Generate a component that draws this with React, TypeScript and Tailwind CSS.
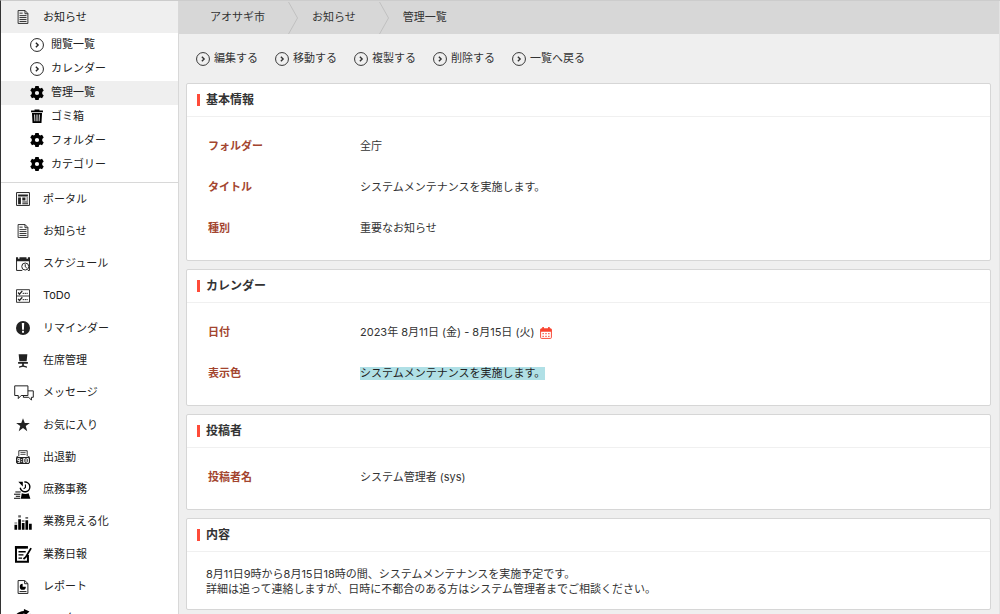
import React from 'react';

type IconProps = { className?: string };

const svgProps = { viewBox: '0 0 20 20', 'aria-hidden': true } as const;

function CircleArrow({ className = 'size-3.5' }: IconProps) {
  return (
    <svg {...svgProps} className={className} fill="none" stroke="currentColor">
      <circle cx="10" cy="10" r="9.2" strokeWidth="1.4" />
      <path d="M8.4 6.8 11.6 10l-3.2 3.2" strokeWidth="2" />
    </svg>
  );
}

function Gear() {
  return (
    <svg {...svgProps} className="size-3.5" fill="black" fillRule="evenodd">
      <path d="M7.6 0h4.8l.5 2.6 1.6.9 2.7-.9 2.4 4-2.1 1.8v3.2l2.1 1.8-2.4 4-2.7-.9-1.6.9-.5 2.6H7.600l-.5-2.6-1.6-.9-2.700.9-2.400-4 2.100-1.800V8.400L.4 6.600l2.400-4 2.700.9 1.600-.9zM10 7a3 3 0 1 0 0 6 3 3 0 0 0 0-6z" />
    </svg>
  );
}

function Trash() {
  return (
    <svg {...svgProps} className="size-3.5" fill="black" fillRule="evenodd">
      <path d="M1.500 2.200h5V.6h7v1.600h5v2.600h-17zM2.800 5.800h14.400L16.400 20H3.600zM6 8l.4 9.600h1.200L7.300 8zm3.300 0v9.600h1.400V8zm3.400 0-.3 9.600h1.200L14 8z" />
    </svg>
  );
}

function DocIcon() {
  return (
    <svg {...svgProps} className="size-3.5" fill="none" stroke="currentColor" strokeWidth="1.3">
      <path d="M3 .8h10L17 5v14.2H3zM12.8 1v4.300H17" />
      <path d="M5 4.500h4.500M5 8h10M5 10.800h10M5 13.600h10M5 16.400h10" />
    </svg>
  );
}

function PortalIcon() {
  return (
    <svg {...svgProps} className="size-3.5" fill="currentColor">
      <path d="M.8.8h18.400v18.400H.8z" fill="none" stroke="currentColor" strokeWidth="1.4" />
      <path d="M3 3.500h14v3H3zM3 8h4v9.500H3zM9 8h4.500v4H9zM15 8h2.200v1.400H15zM15 10.600h2.200V12H15zM9 13.500h8.200V15H9zM9 16.200h8.200v1.400H9z" />
    </svg>
  );
}

function ScheduleIcon() {
  return (
    <svg {...svgProps} className="size-3.5" fill="none" stroke="currentColor" strokeWidth="1.4">
      <path d="M.8 5v14.200H9M19.200 5v14.200H17" />
      <path d="M0 .5h3v2h2v-2h10v2h2v-2h3V6H0z" fill="currentColor" stroke="none" />
      <circle cx="13.2" cy="13.6" r="5" />
      <path d="M13.200 10.300v3.600l2.300 2" />
    </svg>
  );
}

function TodoIcon() {
  return (
    <svg {...svgProps} className="size-3.5" fill="none" stroke="currentColor">
      <path d="M.7 1h18.600v18H.7zM.7 10h18.600" strokeWidth="1.3" />
      <path d="m3 5 2 2.400L9 2.800M3 14l2 2.400 4-4.600" strokeWidth="1.8" />
      <path d="M9.500 6.200h7.500M9.500 15.200h7.500" strokeWidth="1.4" strokeDasharray="2.4 .8" />
    </svg>
  );
}

function AlertIcon() {
  return (
    <svg {...svgProps} className="size-3.5">
      <circle cx="10" cy="10" r="10" fill="currentColor" />
      <path d="M8.300 3h3.400l-.4 9.400H8.700zM8.600 14h2.800v2.800H8.600z" fill="white" />
    </svg>
  );
}

function ChairIcon() {
  return (
    <svg {...svgProps} className="size-3.5" fill="currentColor">
      <path d="M3.800.5h12.400l-1 10H4.800zM3 11.500h14V14h-5.800v2.600l4.500 1.400v1.500L10 18.200l-5.700 1.300V18l4.500-1.400V14H3z" />
    </svg>
  );
}

function ChatIcon() {
  return (
    <svg viewBox="0 0 28 22" aria-hidden="true" className="ml-0.5 h-4 w-5 shrink-0" fill="white" stroke="currentColor" strokeWidth="1.4">
      <path d="M15 8h12v9h-2.600v4l-3.800-4H13z" />
      <path d="M1 1h18.500v13.500H10L6 18.800v-4.300H1z" />
    </svg>
  );
}

function StarIcon() {
  return (
    <svg {...svgProps} className="size-3.5" fill="currentColor">
      <path d="m10 .2 2.500 7h7.300l-5.900 4.300 2.200 7.300L10 14.400l-6.100 4.400 2.200-7.300L.2 7.200h7.300z" />
    </svg>
  );
}

function TimeCardIcon() {
  return (
    <svg {...svgProps} className="size-3.5" fill="none" stroke="currentColor">
      <path d="M4 9V1h12v8" strokeWidth="1.3" />
      <path d="M6.300 3.700h7.400M6.300 6.300h7.400" strokeWidth="1.1" />
      <path d="M1 8.800h2v1.200h14V8.800h2l1 2.700V18l-1.800 2H1.800L0 18v-6.500z" fill="currentColor" stroke="none" />
      <path d="M5.300 15H2.500v-2.800h2.800v5.500H2.500M8 13v1.400M8 16v1.400M10.600 12.200h2.400v5.500h-2.400zM15.400 12.200h2.400v5.500h-2.400z" stroke="white" strokeWidth="1.3" />
    </svg>
  );
}

function DutyIcon() {
  return (
    <svg {...svgProps} className="size-4.5" fill="none" stroke="black">
      <path d="M11.500 1.200a5.400 5.400 0 1 1-4.600 6.300" strokeWidth="1.6" />
      <path d="M4.800.8h5v5.200z" fill="black" stroke="none" />
      <path d="M12.700 4v3.200l-2 1.600" strokeWidth="1.2" />
      <path d="M8.600 13.500c2.500 1.200 5.600 1.200 7.600 0l2 6.300H7.600z" fill="black" stroke="none" />
      <path d="M1.500 12.200h6M0 14.700h7M2 17h4.800M0 19.200h7" strokeWidth="1.1" />
    </svg>
  );
}

function ChartIcon() {
  return (
    <svg {...svgProps} className="size-4.5" fill="black">
      <path d="M.5 13h3v5.500h-3zM4.700 7h3v11.500h-3zM8.700 11h3v7.500h-3zM12.700 8h3v10.500h-3zM16.700 12h3v6.500h-3z" />
      <path d="M4.700 2.500h3V5h-3zM8.700 8h3v1.600h-3zM12.700 4.500h3v2h-3zM.5 10.500h3v1.300h-3z" opacity=".6" />
    </svg>
  );
}

function DiaryIcon() {
  return (
    <svg {...svgProps} className="size-4.5" fill="none" stroke="black">
      <path d="M15.500 11v7.500H2.200V2.500h11" strokeWidth="2.2" />
      <path d="M1 1.200h14.500V4H1z" fill="black" stroke="none" />
      <path d="M19 3.500 13 13.500l-2.500 2" strokeWidth="2" />
      <path d="M5 7.500h8M5 11h5.500M5 14.500h4" strokeWidth="1.4" />
    </svg>
  );
}

function ReportIcon() {
  return (
    <svg {...svgProps} className="size-3.5" fill="none" stroke="currentColor" strokeWidth="1.4">
      <path d="M3 .8h9.500L17 5v14.200H3zM12.300 1v4.300H17" />
      <path d="M9.500 5.500v4H14a4.300 4.300 0 1 1-4.500-4z" fill="black" stroke="none" />
      <path d="M5 16.500h10" />
    </svg>
  );
}

function FlowIcon() {
  return (
    <svg {...svgProps} className="size-5" fill="black">
      <path d="M11 0l5.500 2.500L12 6.500 11.300 4.500C8 5 6.500 7 6 9.500L1.500 8C3 4.500 6.500 2.200 10.800 2zM17 4.500l2 4-3-1zM3 12h5v6H3zM12 12h5v6h-5z" />
    </svg>
  );
}

function CalendarIcon() {
  return (
    <svg {...svgProps} className="size-3 text-[#f9432f]" fill="none" stroke="currentColor">
      <rect x="1" y="3" width="18" height="16" rx="1.5" strokeWidth="1.6" />
      <path d="M1 3h18v5H1zM3.800 0h2.700v4H3.800zM13.500 0h2.700v4h-2.700z" fill="currentColor" stroke="none" />
      <path d="M4 11h12M4 15.500h12" strokeWidth="2" strokeDasharray="2.6 2.1" opacity=".8" />
    </svg>
  );
}

const subItems = [
  { label: '閲覧一覧', icon: <CircleArrow /> },
  { label: 'カレンダー', icon: <CircleArrow /> },
  { label: '管理一覧', icon: <Gear />, active: true },
  { label: 'ゴミ箱', icon: <Trash /> },
  { label: 'フォルダー', icon: <Gear /> },
  { label: 'カテゴリー', icon: <Gear /> },
];

const mainItems = [
  { label: 'ポータル', icon: <PortalIcon /> },
  { label: 'お知らせ', icon: <DocIcon /> },
  { label: 'スケジュール', icon: <ScheduleIcon /> },
  { label: 'ToDo', icon: <TodoIcon /> },
  { label: 'リマインダー', icon: <AlertIcon /> },
  { label: '在席管理', icon: <ChairIcon /> },
  { label: 'メッセージ', icon: <ChatIcon /> },
  { label: 'お気に入り', icon: <StarIcon /> },
  { label: '出退勤', icon: <TimeCardIcon /> },
  { label: '庶務事務', icon: <DutyIcon /> },
  { label: '業務見える化', icon: <ChartIcon /> },
  { label: '業務日報', icon: <DiaryIcon /> },
  { label: 'レポート', icon: <ReportIcon /> },
  { label: 'ワークフロー', icon: <FlowIcon /> },
];

const crumbs = ['アオサギ市', 'お知らせ', '管理一覧'];
const actions = ['編集する', '移動する', '複製する', '削除する', '一覧へ戻る'];

function MenuLink({ label, icon }: { label: string; icon: React.ReactNode }) {
  return (
    <a href="#" className="flex h-full items-center gap-2.5 pl-3">
      <span className="flex w-5 shrink-0 justify-center">{icon}</span>
      {label}
    </a>
  );
}

function Card({ title, children }: { title: string; children: React.ReactNode }) {
  return (
    <section className="rounded-xs border border-[#d6d6d6] bg-white">
      <h2 className="flex h-[33px] items-center gap-1.5 border-b border-[#f0f0f0] pl-2.5 text-xs font-bold text-[#333]">
        <span className="h-3 w-[3px] bg-[#ff4b39]" />
        {title}
      </h2>
      {children}
    </section>
  );
}

function Fields({ rows }: { rows: [string, React.ReactNode][] }) {
  return (
    <dl className="px-[21px] pt-[9px] pb-[11px]">
      {rows.map(([name, value]) => (
        <div key={name} className="flex h-[41px] items-center">
          <dt className="w-[152px] shrink-0 font-bold text-[#a3452f]">{name}</dt>
          <dd className="flex items-center gap-1.5">{value}</dd>
        </div>
      ))}
    </dl>
  );
}

export default function App() {
  return (
    <div className="flex h-screen overflow-hidden border-t border-l border-t-[#cccccc] border-l-[#333] bg-[#efefef] font-['Inter','Noto_Sans_CJK_JP',sans-serif] text-[11px] leading-[15px] text-[#333]">
      <nav className="w-[178px] shrink-0 overflow-hidden border-r border-[#d8d8d8] bg-white text-[#222]">
        <div className="h-8 bg-[#efefef]">
          <MenuLink label="お知らせ" icon={<DocIcon />} />
        </div>
        <ul className="grid h-[150px] auto-rows-fr border-b border-[#d8d8d8] pb-1.5">
          {subItems.map((item) => (
            <li key={item.label} className={item.active ? 'bg-[#efefef]' : ''}>
              <a href="#" className="flex h-full items-center gap-[7px] pl-[29px]">
                {item.icon}
                {item.label}
              </a>
            </li>
          ))}
        </ul>
        <ul className="grid h-[452px] auto-rows-fr">
          {mainItems.map((item) => (
            <li key={item.label}>
              <MenuLink {...item} />
            </li>
          ))}
        </ul>
      </nav>

      <div className="min-w-0 flex-1 border-r border-[#e2e2e2]">
        <nav aria-label="パンくず" className="flex h-[33px] items-center bg-[#d7d7d7] pl-[31px]">
          {crumbs.map((crumb, i) => (
            <React.Fragment key={crumb}>
              {i > 0 && (
                <svg viewBox="0 0 10 32" aria-hidden="true" className="mr-3.5 ml-[23px] h-8 w-2.5" fill="none" stroke="#c0c0c0">
                  <path d="M.5 0 9.500 16 .5 32" />
                </svg>
              )}
              <a href="#">{crumb}</a>
            </React.Fragment>
          ))}
        </nav>

        <main className="pr-2 pl-[7px]">
          <div className="flex h-[49px] items-center gap-[17px] pl-2.5">
            {actions.map((action) => (
              <a key={action} href="#" className="flex items-center gap-1">
                <CircleArrow />
                {action}
              </a>
            ))}
          </div>

          <div className="flex flex-col gap-2">
            <Card title="基本情報">
              <Fields
                rows={[
                  ['フォルダー', '全庁'],
                  ['タイトル', 'システムメンテナンスを実施します。'],
                  ['種別', '重要なお知らせ'],
                ]}
              />
            </Card>
            <Card title="カレンダー">
              <Fields
                rows={[
                  ['日付', <>2023年 8月11日 (金) - 8月15日 (火) <CalendarIcon /></>],
                  ['表示色', <span className="bg-[#b0e0e6] leading-[13px] text-[#222]">システムメンテナンスを実施します。</span>],
                ]}
              />
            </Card>
            <Card title="投稿者">
              <Fields rows={[['投稿者名', 'システム管理者 (sys)']]} />
            </Card>
            <Card title="内容">
              <p className="px-[19px] pt-[15px] pb-3">
                8月11日9時から8月15日18時の間、システムメンテナンスを実施予定です。
                <br />
                詳細は追って連絡しますが、日時に不都合のある方はシステム管理者までご相談ください。
              </p>
            </Card>
          </div>
        </main>
      </div>
    </div>
  );
}
